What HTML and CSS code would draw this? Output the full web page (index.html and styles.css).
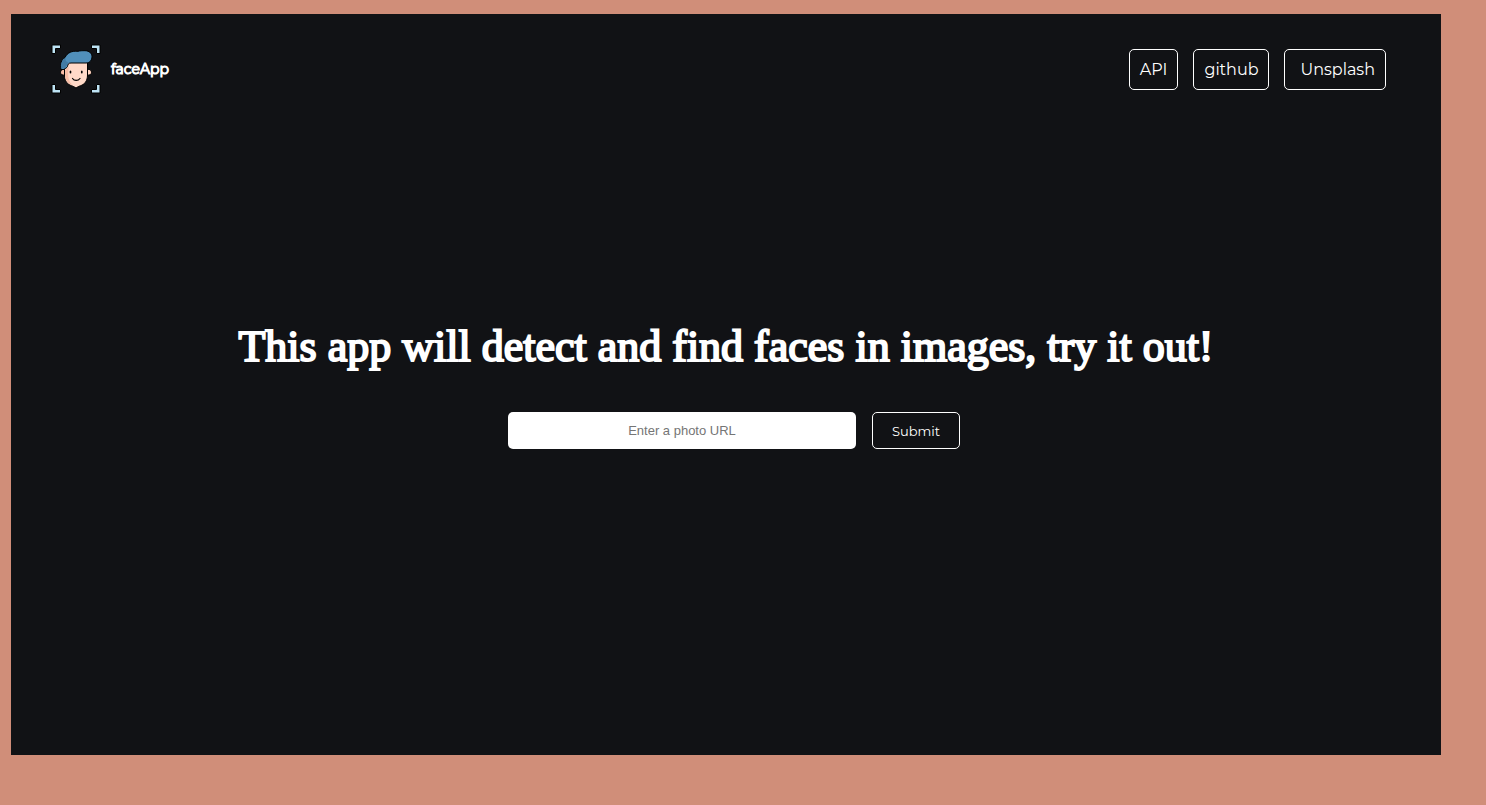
FILE: index.html
```
<!DOCTYPE html>
<html lang="en">
<head>
  <meta charset="utf-8">
  <meta name="viewport" content="width=device-width, initial-scale=1">
  <title>faceApp</title>
  <link rel="stylesheet" href="styles.css">
</head>
<body>
  <div class="panel">
    <header class="header">
      <div class="brand">
        <svg class="logo" viewBox="0 0 50 50" aria-hidden="true">
          <g fill="#bee4f5" stroke="#000" stroke-width="1">
            <path d="M1 1h8.500v3.500h-5v5H1z"/>
            <path d="M49 1h-8.500v3.500h5v5H49z"/>
            <path d="M1 49h8.500v-3.500h-5v-5H1z"/>
            <path d="M49 49h-8.500v-3.500h5v-5H49z"/>
          </g>
          <g stroke="#000" stroke-width="1" stroke-linejoin="round">
            <path fill="#f8bda6" d="M14 25.500c-6-1.500-6 7 0 5.500z"/>
            <path fill="#ffd3bf" d="M36 25.500c6-1.500 6 7 0 5.500z"/>
            <path fill="#ffd9c8" d="M13.500 22 18 17h18.500v14c0 6-3 9.500-7 10.700-1.800.5-2.800 1.300-4.500 2.300-1.700-1-2.700-1.800-4.500-2.300-4-1.200-7-4.700-7-10.700z"/>
            <path fill="#508fba" d="M10 25.500c-1-6 0-9.500 4-12C16.500 8.500 21 6.700 27 7.300c2-.6 4-.6 7-.6 4.500 0 7 3 7 6 0 3.500-2.500 6.300-6 6.300H20c-3 0-3 1.500-3.500 3.500-.5 1.500-2 1.500-3.500 3z"/>
          </g>
          <path fill="#f8bda6" d="M14 26c1.500-1 3-2 3.500-4 .5 5-2.500 13 4 19-5-1.500-7.500-5-7.500-10z"/>
          <path fill="#427ba4" d="M10.600 24.500c-.6-5 .2-8.200 4-10.600-.5 2.300.2 3.600 2.800 4.600-1.800 2.500-1.300 4-4.800 6z"/>
          <ellipse cx="19.500" cy="28" rx=".9" ry="1.500"/>
          <ellipse cx="30.800" cy="28" rx=".9" ry="1.500"/>
          <path fill="none" stroke="#000" stroke-width="1.200" stroke-linecap="round" d="M21.500 34.500c1.800 2.600 5.500 2.600 7.500 0"/>
        </svg>
        <span class="brand-name">faceApp</span>
      </div>
      <nav class="nav">
        <a class="nav-link" href="#api">API</a>
        <a class="nav-link" href="#github">github</a>
        <a class="nav-link nav-link-wide" href="#unsplash">Unsplash</a>
      </nav>
    </header>
    <main class="main">
      <h1 class="title">This app will detect and find faces in images, try it out!</h1>
      <form class="form">
        <input class="url" type="text" placeholder="Enter a photo URL" aria-label="Enter a photo URL">
        <button class="submit" type="submit">Submit</button>
      </form>
    </main>
  </div>
</body>
</html>
```
FILE: styles.css
```
* {
  box-sizing: border-box;
}

body {
  margin: 0;
  padding: 14px 45px 50px 11px;
  background: #d08e79;
  font-family: Montserrat, Inter, sans-serif;
  color: #fff;
}

.panel {
  min-height: calc(100vh - 64px);
  background: #111215;
}

.header {
  display: flex;
  align-items: center;
  justify-content: space-between;
  padding: 30px 55px 0 40px;
}

.brand {
  display: flex;
  align-items: center;
  gap: 10px;
}

.logo {
  width: 50px;
  height: 50px;
}

.brand-name {
  font-size: 14px;
  font-weight: 400;
  -webkit-text-stroke: 1px #fff;
}

.nav {
  display: flex;
  gap: 15px;
}

.nav-link {
  padding: 0 10px;
  border: 1px solid #fff;
  border-radius: 5px;
  color: #fff;
  font-size: 16px;
  line-height: 39px;
  text-decoration: none;
}

.nav-link-wide {
  padding-left: 15px;
}

.main {
  display: flex;
  flex-direction: column;
  align-items: center;
  padding: 223px 20px 0;
}

.title {
  margin: 0;
  font-family: "Liberation Serif", serif;
  font-size: 44px;
  font-weight: 400;
  line-height: 60px;
  text-align: center;
  -webkit-text-stroke: 2px #fff;
}

.form {
  display: flex;
  gap: 16px;
  margin: 35px 0 0 16px;
}

.url {
  width: 348px;
  height: 37px;
  border: 0;
  border-radius: 5px;
  background: #fff;
  font-family: "Liberation Sans", Arial, sans-serif;
  font-size: 13px;
  text-align: center;
}

.url::placeholder {
  color: #757575;
}

.submit {
  width: 88px;
  height: 37px;
  padding: 0;
  border: 1px solid #fff;
  border-radius: 5px;
  background: transparent;
  color: #fff;
  font-family: inherit;
  font-size: 13px;
}
```
